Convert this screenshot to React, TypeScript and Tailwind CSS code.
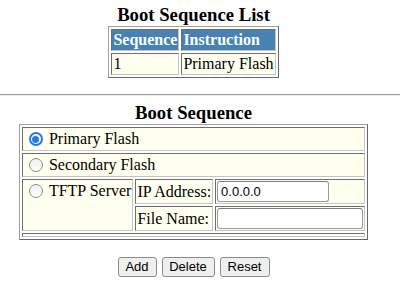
import { FC } from 'react';

const serif = { fontFamily: '"Liberation Serif", "Times New Roman", serif' };

const outer =
  'border-separate border-spacing-[2px] border border-t-[#a0a0a0] border-l-[#a0a0a0] border-b-[#666666] border-r-[#666666] bg-white';
const cell =
  'border border-t-[#6e6e6e] border-l-[#6e6e6e] border-b-[#c4c4c4] border-r-[#c4c4c4] p-px leading-[18px] text-left align-middle';
const ivory = `${cell} bg-[#fffff0]`;
const head = `${cell} bg-[#4682b4] text-center font-bold text-white`;

const Radio: FC<{ checked?: boolean }> = ({ checked }) =>
  checked ? (
    <span className="ml-[5px] mr-[6px] flex h-[14px] w-[14px] shrink-0 items-center justify-center rounded-full bg-[#1f78f4]">
      <span className="flex h-[10px] w-[10px] items-center justify-center rounded-full bg-white">
        <span className="h-[7px] w-[7px] rounded-full bg-[#1f78f4]" />
      </span>
    </span>
  ) : (
    <span className="ml-[5px] mr-[6px] h-[14px] w-[14px] shrink-0 rounded-full border border-[#8c8c8c] bg-gradient-to-b from-[#f0f0f0] to-white" />
  );

const Choice: FC<{ label: string; checked?: boolean }> = ({ label, checked }) => (
  <div className="flex h-[20px] items-center whitespace-nowrap">
    <Radio checked={checked} />
    <span>{label}</span>
  </div>
);

const TextBox: FC<{ width: string; value?: string }> = ({ width, value }) => (
  <input
    readOnly
    value={value ?? ''}
    className={`${width} block h-[21px] rounded-[3px] border border-[#9a9a9a] border-t-[#7c7c7c] bg-white px-[3px] text-[13px] text-black outline-none`}
    style={{ fontFamily: '"Liberation Sans", Arial, sans-serif' }}
  />
);

const Button: FC<{ label: string; width: string }> = ({ label, width }) => (
  <button
    className={`${width} h-[20px] rounded-[3px] border border-[#8a8a8a] bg-[#efefef] text-[13px] leading-[16px] text-black`}
    style={{ fontFamily: '"Liberation Sans", Arial, sans-serif' }}
  >
    {label}
  </button>
);

export default function App() {
  return (
    <div className="min-h-[286px] w-[400px] bg-white text-[16px] text-black" style={serif}>
      <div className="flex flex-col items-center pr-[13px] pt-[4px]">
        <h3 className="text-[18.72px] font-bold leading-[22px]">Boot Sequence List</h3>
        <table className={outer}>
          <tbody>
            <tr>
              <th className={head}>Sequence</th>
              <th className={head}>Instruction</th>
            </tr>
            <tr>
              <td className={ivory}>1</td>
              <td className={ivory}>Primary Flash</td>
            </tr>
          </tbody>
        </table>
      </div>

      <hr className="mt-[16px] border-t border-b border-t-[#9a9a9a] border-b-[#ececec]" />

      <div className="flex flex-col items-center pr-[13px] pt-[6px]">
        <h3 className="text-[18.72px] font-bold leading-[22px]">Boot Sequence</h3>
        <table className={outer}>
          <tbody>
            <tr>
              <td colSpan={3} className={ivory}>
                <Choice label="Primary Flash" checked />
              </td>
            </tr>
            <tr>
              <td colSpan={3} className={ivory}>
                <Choice label="Secondary Flash" />
              </td>
            </tr>
            <tr>
              <td rowSpan={2} className={`${ivory} !align-top`}>
                <Choice label="TFTP Server" />
              </td>
              <td className={ivory}>IP Address:</td>
              <td className={ivory}>
                <TextBox width="w-[112px]" value="0.0.0.0" />
              </td>
            </tr>
            <tr>
              <td className={ivory}>File Name:</td>
              <td className={ivory}>
                <TextBox width="w-[146px]" />
              </td>
            </tr>
            <tr>
              <td colSpan={3} className={`${ivory} h-[4px] !p-0 !leading-[0]`} />
            </tr>
          </tbody>
        </table>

        <div className="mt-[17px] flex gap-[5px]">
          <Button label="Add" width="w-[39px]" />
          <Button label="Delete" width="w-[53px]" />
          <Button label="Reset" width="w-[50px]" />
        </div>
      </div>
    </div>
  );
}
